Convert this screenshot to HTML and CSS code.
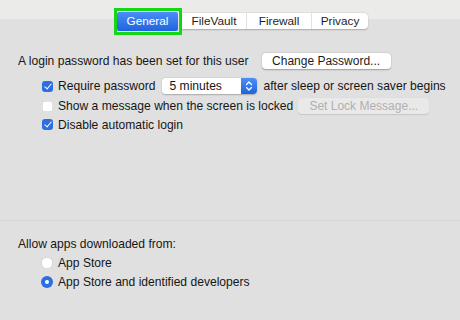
FILE: index.html
```html
<!DOCTYPE html>
<html lang="en">
<head>
    <meta charset="UTF-8">
    <title>Security &amp; Privacy</title>
    <link rel="stylesheet" href="styles.css">
</head>
<body>
    <div class="tabbar">
        <div class="highlight">
            <div class="tab active">General</div>
        </div>
        <div class="segments">
            <div class="tab">FileVault</div>
            <div class="tab">Firewall</div>
            <div class="tab">Privacy</div>
        </div>
    </div>

    <div class="panel">
        <div class="row first">
            <span>A login password has been set for this user</span>
            <button class="btn">Change Password...</button>
        </div>
        <div class="options">
            <div class="row">
                <span class="check on"></span>
                <span>Require password</span>
                <div class="popup">
                    <span class="popup-value">5 minutes</span>
                    <span class="stepper">
                        <svg width="8" height="12" viewBox="0 0 8 12"><path d="M1.5 4.5 L4 2 L6.5 4.5 M1.5 7.5 L4 10 L6.5 7.5" fill="none" stroke="#fff" stroke-width="1.3" stroke-linecap="round" stroke-linejoin="round"/></svg>
                    </span>
                </div>
                <span>after sleep or screen saver begins</span>
            </div>
            <div class="row">
                <span class="check"></span>
                <span>Show a message when the screen is locked</span>
                <button class="btn disabled">Set Lock Message...</button>
            </div>
            <div class="row">
                <span class="check on"></span>
                <span>Disable automatic login</span>
            </div>
        </div>
    </div>

    <div class="apps">
        <div class="label">Allow apps downloaded from:</div>
        <div class="row radio-row">
            <span class="radio"></span>
            <span>App Store</span>
        </div>
        <div class="row radio-row">
            <span class="radio on"></span>
            <span>App Store and identified developers</span>
        </div>
    </div>
</body>
</html>
```

FILE: styles.css
```css
body {
    margin: 0;
    width: 460px;
    height: 320px;
    overflow: hidden;
    font-family: 'Liberation Sans', Arial, sans-serif;
    font-size: 12.1px;
    color: #161616;
    background: linear-gradient(#ebebe9 0, #ebebe9 19px, #e0e0e0 19px);
}

.tabbar {
    display: flex;
    align-items: center;
    padding: 8px 0 0 114px;
    height: 26px;
}

.highlight {
    border: 3px solid #17d617;
    padding: 1px 1px 0 0;
    height: 20px;
    box-sizing: content-box;
}

.tab {
    display: flex;
    align-items: center;
    justify-content: center;
    height: 16px;
    padding: 0 10px;
    font-size: 11.8px;
    color: #1e1e1e;
}

.tab.active {
    width: 61px;
    height: 19px;
    padding: 0;
    box-sizing: border-box;
    border-radius: 2px;
    color: #fff;
    background: linear-gradient(#4a8ef8, #1f64dc);
}

.segments {
    display: flex;
    background: #fff;
    border-radius: 0 4px 4px 0;
    box-shadow: 0 0.5px 1.5px rgba(0, 0, 0, 0.25);
}

.segments .tab {
    width: 64px;
    padding: 0;
    border-left: 1px solid #e2e2e2;
}

.segments .tab:first-child {
    border-left: none;
}

.segments .tab:last-child {
    width: 56px;
}

.panel {
    padding: 18px 0 0 18px;
}

.row {
    display: flex;
    align-items: center;
    height: 18px;
    white-space: nowrap;
}

.row.first {
    gap: 13px;
}

.options {
    padding: 6px 0 0 24px;
}

.options .row {
    height: 20px;
}

.options .row:last-child {
    height: 19px;
    margin-top: -1px;
}

.btn {
    font-family: inherit;
    font-size: 12px;
    color: #1c1c1c;
    background: #fff;
    border: none;
    border-radius: 4px;
    height: 16px;
    padding: 0;
    width: 129px;
    box-shadow: 0 0.5px 1.5px rgba(0, 0, 0, 0.3);
}

.btn.disabled {
    margin-left: 5px;
    width: 131px;
    color: #b0b0b0;
    background: #e9e9e9;
    box-shadow: 0 0.5px 1px rgba(0, 0, 0, 0.12);
}

.check {
    width: 11px;
    height: 11px;
    margin-right: 5px;
    border-radius: 3px;
    background: #fff;
    box-shadow: inset 0 0 0 0.5px #c4c4c4;
    position: relative;
}

.check.on {
    background: #2d6ee0;
    box-shadow: none;
}

.check.on::after {
    content: "";
    position: absolute;
    left: 3.5px;
    top: 1px;
    width: 3px;
    height: 6px;
    border: solid #fff;
    border-width: 0 1.6px 1.6px 0;
    transform: rotate(40deg);
}

.popup {
    display: flex;
    height: 16px;
    margin: 0 6px 0 7px;
    border-radius: 4px;
    overflow: hidden;
    box-shadow: 0 0.5px 1.5px rgba(0, 0, 0, 0.25);
}

.popup-value {
    display: flex;
    align-items: center;
    width: 72px;
    padding-left: 7px;
    background: #fff;
}

.stepper {
    display: flex;
    align-items: center;
    justify-content: center;
    width: 16px;
    background: linear-gradient(#4b8ff8, #2163db);
}

.apps {
    margin-top: 86px;
    border-top: 1px solid #d5d5d5;
    padding: 15px 0 0 18px;
}

.label {
    height: 16px;
    line-height: 16px;
}

.radio-row {
    padding-left: 23px;
    height: 19px;
}

.radio-row:nth-child(2) {
    margin-top: 1px;
}

.radio {
    width: 12px;
    height: 12px;
    margin-right: 5px;
    border-radius: 50%;
    background: #fff;
    box-shadow: inset 0 0 0 0.5px #bcbcbc;
    position: relative;
}

.radio.on {
    background: #2d6ee0;
    box-shadow: none;
}

.radio.on::after {
    content: "";
    position: absolute;
    left: 4px;
    top: 4px;
    width: 4px;
    height: 4px;
    border-radius: 50%;
    background: #fff;
}
```
